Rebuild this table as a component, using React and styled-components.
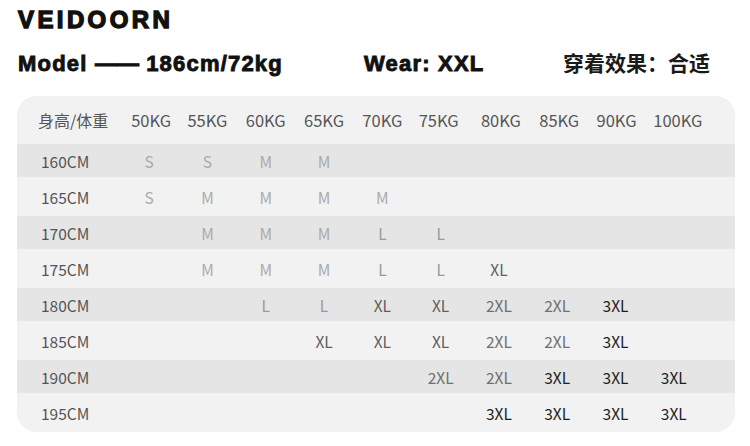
import React from "react";
import styled, { createGlobalStyle } from "styled-components";

const GlobalStyle = createGlobalStyle`
  html, body { margin: 0; padding: 0; background: #ffffff; }
  body { font-family: "Liberation Sans", Arial, sans-serif; }
`;

const Page = styled.div`
  width: 750px;
  height: 446px;
  box-sizing: border-box;
  padding: 8px 15px 0 17px;
  overflow: hidden;
`;

const Brand = styled.h1`
  margin: 0;
  padding-left: 1px;
  font-family: "Liberation Sans", Arial, sans-serif;
  font-weight: 700;
  font-size: 24px;
  line-height: 24px;
  letter-spacing: 3.4px;
  color: #111;
  -webkit-text-stroke: 1.4px #111;
`;

const InfoRow = styled.div`
  display: flex;
  align-items: baseline;
  margin-top: 19px;
  padding-left: 1px;
  height: 22px;
`;

const InfoItem = styled.div`
  flex: 0 0 ${(p) => p.$w || "auto"};
  font-family: "Liberation Sans", Arial, sans-serif;
  font-weight: 700;
  font-size: 22px;
  line-height: 22px;
  letter-spacing: 1.2px;
  color: #111;
  -webkit-text-stroke: 0.9px #111;
  white-space: nowrap;
`;

const Dash = styled.span`
  letter-spacing: 0;
`;

const CnItem = styled.div`
  font-family: "Noto Sans CJK SC", sans-serif;
  font-weight: 700;
  font-size: 21px;
  line-height: 22px;
  color: #1a1a1a;
  white-space: nowrap;
`;

const Table = styled.div`
  margin-top: 23px;
  width: 718px;
  border-radius: 20px;
  overflow: hidden;
  background: #f2f2f2;
  font-family: "Noto Sans CJK SC", sans-serif;
  font-size: 15.5px;
`;

const Row = styled.div`
  display: grid;
  grid-template-columns: 103px repeat(10, 58.3px) 1fr;
  align-items: center;
  height: ${(p) => p.$h}px;
  background: ${(p) => (p.$dark ? "#e5e5e5" : "#f2f2f2")};
`;

const Label = styled.div`
  padding-left: ${(p) => (p.$head ? 21 : 24)}px;
  color: #555;
  font-size: ${(p) => (p.$head ? 16 : 15.5)}px;
  white-space: nowrap;
`;

const HeadCell = styled.div`
  text-align: center;
  color: #555;
  font-size: 16.5px;
  white-space: nowrap;
  transform: translateX(${(p) => p.$shift || 0}px);
`;

const SIZE_COLORS = {
  S: "#aaaaaa",
  M: "#aaaaaa",
  L: "#9a9a9a",
  XL: "#5f5f5f",
  "2XL": "#707070",
  "3XL": "#1e1e1e",
};

const Cell = styled.div`
  text-align: center;
  color: ${(p) => SIZE_COLORS[p.$size] || "#999"};
  white-space: nowrap;
`;

const weights = ["50KG", "55KG", "60KG", "65KG", "70KG", "75KG", "80KG", "85KG", "90KG", "100KG"];
const shifts = [2, 0, 0, 0, 0, -2, 2, 2, 1, 4];

const rows = [
  ["160CM", ["S", "S", "M", "M", "", "", "", "", "", ""]],
  ["165CM", ["S", "M", "M", "M", "M", "", "", "", "", ""]],
  ["170CM", ["", "M", "M", "M", "L", "L", "", "", "", ""]],
  ["175CM", ["", "M", "M", "M", "L", "L", "XL", "", "", ""]],
  ["180CM", ["", "", "L", "L", "XL", "XL", "2XL", "2XL", "3XL", ""]],
  ["185CM", ["", "", "", "XL", "XL", "XL", "2XL", "2XL", "3XL", ""]],
  ["190CM", ["", "", "", "", "", "2XL", "2XL", "3XL", "3XL", "3XL"]],
  ["195CM", ["", "", "", "", "", "", "3XL", "3XL", "3XL", "3XL"]],
];

export default function App() {
  return (
    <Page>
      <GlobalStyle />
      <Brand>VEIDOORN</Brand>
      <InfoRow>
        <InfoItem $w="346px">
          Model <Dash>——</Dash> 186cm/72kg
        </InfoItem>
        <InfoItem $w="199px">Wear: XXL</InfoItem>
        <CnItem>穿着效果：合适</CnItem>
      </InfoRow>
      <Table>
        <Row $h={48}>
          <Label $head>身高/体重</Label>
          {weights.map((w, i) => (
            <HeadCell key={w} $shift={shifts[i]}>
              {w}
            </HeadCell>
          ))}
        </Row>
        {rows.map(([h, vals], i) => (
          <Row key={h} $dark={i % 2 === 0} $h={i % 2 === 0 ? 33 : 39}>
            <Label>{h}</Label>
            {vals.map((v, j) => (
              <Cell key={j} $size={v}>
                {v}
              </Cell>
            ))}
          </Row>
        ))}
      </Table>
    </Page>
  );
}
